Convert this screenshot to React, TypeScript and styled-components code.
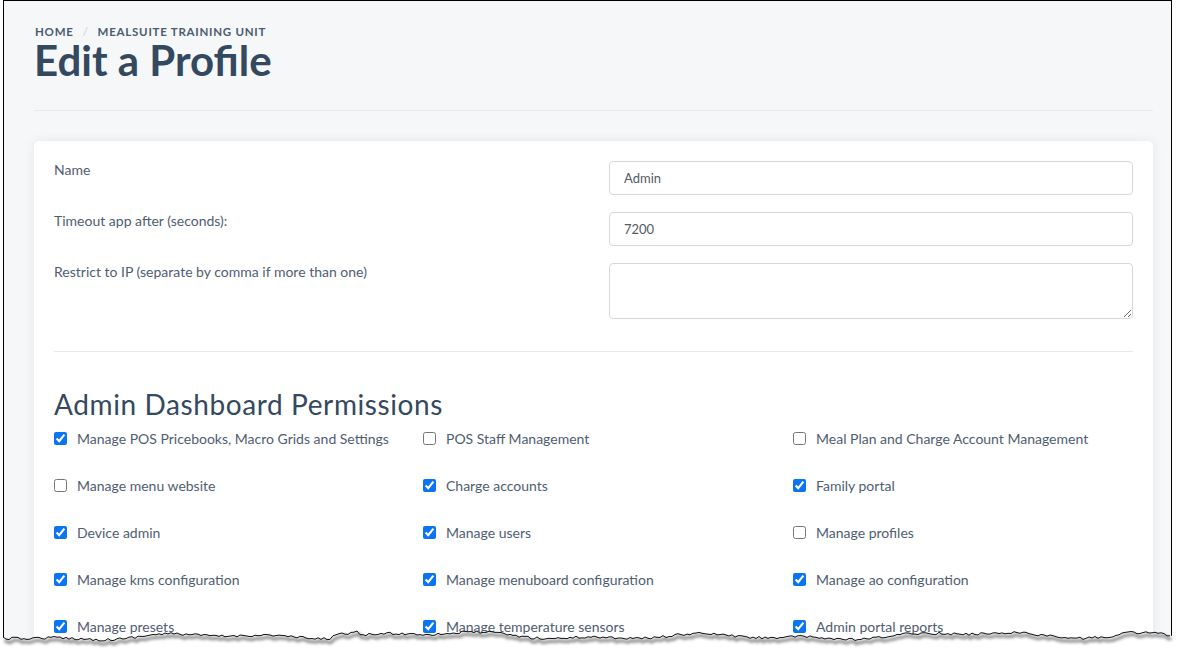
import React from "react";
import styled, { createGlobalStyle } from "styled-components";

const GlobalStyle = createGlobalStyle`
  html, body { margin: 0; padding: 0; background: #ffffff; }
  * { box-sizing: border-box; }
`;

const FONT = `Lato, "Noto Sans", "Liberation Sans", sans-serif`;

const Shell = styled.div`
  position: relative;
  width: 1177px;
  height: 650px;
  overflow: hidden;
  background: #ffffff;
  font-family: ${FONT};
`;

const Paper = styled.div`
  margin-left: 3px;
  width: 1169px;
  height: 650px;
  border: 1px solid #000;
  border-bottom: none;
  background: #f6f7f9;
  padding: 22px 18px 0 30px;
`;

const Breadcrumb = styled.nav`
  display: flex;
  align-items: center;
  gap: 9px;
  font-size: 11.5px;
  font-weight: 700;
  letter-spacing: 0.75px;
  text-transform: uppercase;
  color: #4c5b70;
  line-height: 17px;
  padding-left: 1px;
`;

const Sep = styled.span`
  color: #c9ced6;
  font-weight: 400;
`;

const Title = styled.h1`
  margin: 0;
  font-size: 42px;
  line-height: 40px;
  font-weight: 700;
  color: #34495f;
`;

const Rule = styled.hr<{ $gap?: number }>`
  border: none;
  border-top: 1px solid #e6e9ed;
  margin: ${(p) => p.$gap ?? 0}px 0 0 0;
`;

const Card = styled.section`
  margin-top: 30px;
  background: #ffffff;
  border-radius: 5px;
  box-shadow: 0 0 12px rgba(20, 30, 50, 0.07);
  padding: 20px 20px 40px 20px;
`;

const FieldRow = styled.div`
  display: grid;
  grid-template-columns: 1fr 524px;
  column-gap: 20px;
  align-items: start;
  margin-bottom: 17px;
`;

const Label = styled.label`
  margin-top: -1px;
  font-size: 14px;
  line-height: 20px;
  color: #4f5d71;
`;

const TextInput = styled.input`
  margin: 0;
  width: 100%;
  height: 34px;
  border: 1px solid #d4d8de;
  border-radius: 4px;
  padding: 0 14px;
  font-family: ${FONT};
  font-size: 13px;
  color: #555a60;
  background: #fff;
  outline: none;
`;

const TextArea = styled.textarea`
  margin: 0;
  width: 100%;
  height: 56px;
  border: 1px solid #d4d8de;
  border-radius: 4px;
  padding: 8px 14px;
  font-family: ${FONT};
  font-size: 13px;
  color: #555a60;
  background: #fff;
  outline: none;
  display: block;
`;

const SectionTitle = styled.h2`
  margin: 35px 0 0 0;
  font-size: 28px;
  line-height: 34px;
  font-weight: 400;
  letter-spacing: 0.6px;
  color: #34495f;
`;

const PermGrid = styled.div`
  display: grid;
  grid-template-columns: 369px 370px 1fr;
  row-gap: 27px;
  margin-top: 8px;
`;

const Perm = styled.label`
  display: flex;
  align-items: center;
  gap: 10px;
  font-size: 14px;
  line-height: 20px;
  color: #4f5d71;
  white-space: nowrap;
`;

const Check = styled.input`
  margin: 0;
  width: 13px;
  height: 13px;
  accent-color: #0b74f5;
  flex: none;
  position: relative;
  top: -1px;
`;

const Tear = styled.svg`
  position: absolute;
  left: 0;
  bottom: 0;
  width: 1177px;
  height: 30px;
  pointer-events: none;
`;

const perms: [string, boolean][] = [
  ["Manage POS Pricebooks, Macro Grids and Settings", true],
  ["POS Staff Management", false],
  ["Meal Plan and Charge Account Management", false],
  ["Manage menu website", false],
  ["Charge accounts", true],
  ["Family portal", true],
  ["Device admin", true],
  ["Manage users", true],
  ["Manage profiles", false],
  ["Manage kms configuration", true],
  ["Manage menuboard configuration", true],
  ["Manage ao configuration", true],
  ["Manage presets", true],
  ["Manage temperature sensors", true],
  ["Admin portal reports", true],
];

function buildTear(): string {
  let seed = 12345;
  const rand = () => {
    seed = (seed * 16807) % 2147483647;
    return seed / 2147483647;
  };
  const pts: string[] = [];
  for (let x = 3; x <= 1171; x += 3) {
    const wave =
      2.2 * Math.sin(x / 41) + 1.4 * Math.sin(x / 17 + 1.3) + 1.2 * Math.sin(x / 97 + 0.4);
    const bump = x > 330 && x < 360 ? -4 : x > 1120 && x < 1165 ? -3 : 0;
    const y = 16 + wave + bump + (rand() - 0.5) * 2.6;
    pts.push(`${x},${y.toFixed(1)}`);
  }
  return pts.join(" ");
}

const tearPts = buildTear();

export default function App() {
  const list = tearPts.split(" ");
  const firstY = list[0].split(",")[1];
  const lastY = list[list.length - 1].split(",")[1];
  const under = `M0,${firstY} L${list.join(" L")} L1177,${lastY} L1177,30 L0,30 Z`;
  return (
    <>
      <GlobalStyle />
      <Shell>
        <Paper>
          <Breadcrumb>
            <span>Home</span>
            <Sep>/</Sep>
            <span>Mealsuite Training Unit</span>
          </Breadcrumb>
          <Title>Edit a Profile</Title>
          <Rule $gap={30} />
          <Card>
            <FieldRow>
              <Label>Name</Label>
              <TextInput defaultValue="Admin" />
            </FieldRow>
            <FieldRow>
              <Label>Timeout app after (seconds):</Label>
              <TextInput defaultValue="7200" />
            </FieldRow>
            <FieldRow>
              <Label>Restrict to IP (separate by comma if more than one)</Label>
              <TextArea />
            </FieldRow>
            <Rule $gap={32} />
            <SectionTitle>Admin Dashboard Permissions</SectionTitle>
            <PermGrid>
              {perms.map(([name, on]) => (
                <Perm key={name}>
                  <Check type="checkbox" defaultChecked={on} />
                  {name}
                </Perm>
              ))}
            </PermGrid>
          </Card>
        </Paper>
        <Tear viewBox="0 0 1177 30">
          <defs>
            <filter id="tearBlur" x="-5%" y="-100%" width="110%" height="300%">
              <feGaussianBlur stdDeviation="1.6" />
            </filter>
          </defs>
          <path d={under} fill="#ffffff" />
          <polyline
            points={tearPts}
            fill="none"
            stroke="rgba(0,0,0,0.45)"
            strokeWidth="3"
            transform="translate(1.5,3)"
            filter="url(#tearBlur)"
          />
          <polyline points={tearPts} fill="none" stroke="#111" strokeWidth="1" />
        </Tear>
      </Shell>
    </>
  );
}
